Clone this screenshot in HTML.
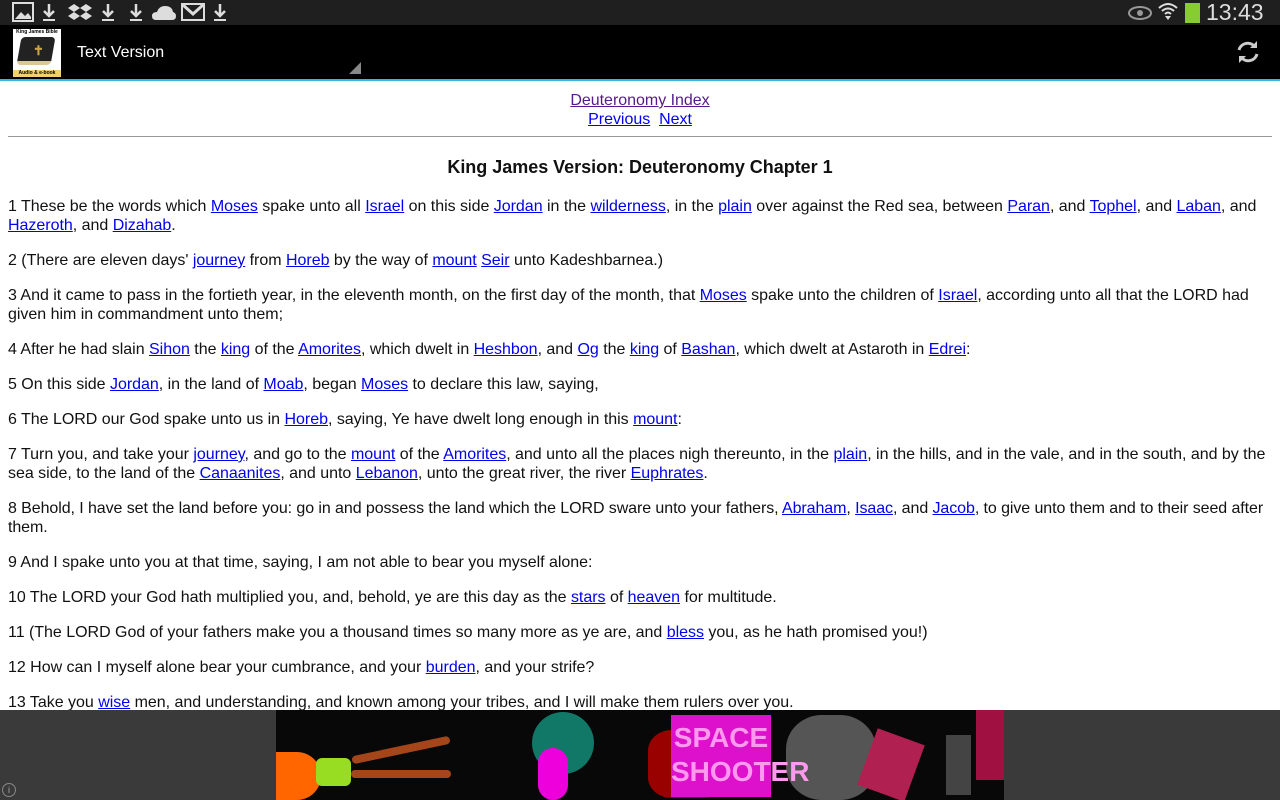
<!DOCTYPE html>
<html><head><meta charset="utf-8"><style>
*{margin:0;padding:0;box-sizing:border-box}
body{width:1280px;height:800px;overflow:hidden;background:#fff;font-family:"Liberation Sans",sans-serif;position:relative}
#sb{position:absolute;top:0;left:0;width:1280px;height:25px;background:#1f1f1f;color:#ddd}
#ab{position:absolute;top:25px;left:0;width:1280px;height:54px;background:#000}
#line{position:absolute;top:79px;left:0;width:1280px;height:2px;background:#33b5e5}
#content{position:absolute;top:82px;left:8px;width:1264px;font-size:16px;line-height:19px;color:#111;letter-spacing:-0.02px}
a{color:#00e;text-decoration:underline}
p{margin-bottom:16px}
#ad{position:absolute;top:710px;left:0;width:1280px;height:90px;background:#3a3a3a}
</style></head><body>
<div id="sb">
<svg width="240" height="25" style="position:absolute;left:12px;top:1px" fill="#ddd">
<rect x="1" y="2" width="20" height="18" fill="none" stroke="#ddd" stroke-width="2"/><path d="M3 18 L9 11 L13 15 L16 12 L19 16 V18Z"/>
<path d="M37 3 V14 M32 10 L37 15 L42 10" stroke="#ddd" stroke-width="2.5" fill="none"/><rect x="31" y="18" width="12" height="2"/>
<path d="M62 3 L68 7 L62 11 L56 7Z M74 3 L80 7 L74 11 L68 7Z M62 11 L68 15 L62 19 L56 15Z M74 11 L80 15 L74 19 L68 15Z"/>
<path d="M96 3 V14 M91 10 L96 15 L101 10" stroke="#ddd" stroke-width="2.5" fill="none"/><rect x="90" y="18" width="12" height="2"/>
<path d="M124 3 V14 M119 10 L124 15 L129 10" stroke="#ddd" stroke-width="2.5" fill="none"/><rect x="118" y="18" width="12" height="2"/>
<path d="M144 19 Q140 19 140 15 Q140 11 145 11 Q147 5 153 5 Q160 5 161 11 Q164 12 164 15 Q164 19 160 19Z"/>
<rect x="170" y="3" width="22" height="16" fill="none" stroke="#ddd" stroke-width="2"/><path d="M171 4 L181 13 L191 4" stroke="#ddd" stroke-width="3" fill="none"/>
<path d="M208 3 V14 M203 10 L208 15 L213 10" stroke="#ddd" stroke-width="2.5" fill="none"/><rect x="202" y="18" width="12" height="2"/>
</svg>
<svg width="80" height="25" style="position:absolute;left:1126px;top:0"><ellipse cx="14" cy="13" rx="11" ry="6" fill="none" stroke="#999" stroke-width="2"/><circle cx="14" cy="13" r="3" fill="#999"/><path d="M33 8 Q42 0 51 8 M36 11 Q42 6 48 11 M39 14 Q42 11 45 14" stroke="#ddd" stroke-width="2" fill="none"/><path d="M42 20 L39 16 L45 16Z" fill="#ddd"/><rect x="59" y="3" width="15" height="20" fill="#8c3"/></svg>
<div style="position:absolute;left:1206px;top:0;font-size:23px;line-height:25px;color:#ddd">13:43</div>
</div>
<div id="ab">
<div style="position:absolute;left:13px;top:4px;width:48px;height:48px;background:#fff">
<div style="font-size:5px;font-weight:bold;text-align:center">King James Bible</div>
<div style="position:absolute;left:6px;top:8px;width:34px;height:28px;background:#222;border-radius:4px;transform:skewX(-10deg);border-bottom:4px solid #d9c89a"></div>
<div style="position:absolute;left:20px;top:14px;color:#c9a24a;font-size:13px;font-weight:bold">✝</div>
<div style="position:absolute;bottom:0;left:0;width:48px;height:7px;background:#f0d070;font-size:5px;text-align:center;font-weight:bold">Audio &amp; e-book</div>
</div>
<div style="position:absolute;left:77px;top:19px;color:#fff;font-size:16px">Text Version</div>
<div style="position:absolute;left:349px;top:37px;width:0;height:0;border-left:12px solid transparent;border-bottom:12px solid #888"></div>
<svg width="26" height="26" style="position:absolute;left:1235px;top:14px" fill="none" stroke="#ccc" stroke-width="3"><path d="M20 8 A9 9 0 0 0 4 11"/><path d="M6 18 A9 9 0 0 0 22 15"/><path d="M15 9 L22 9 L22 2Z" fill="#ccc" stroke="none"/><path d="M11 17 L4 17 L4 24Z" fill="#ccc" stroke="none"/></svg>
</div>
<div id="line"></div>
<div id="content">
<div style="text-align:center;margin-top:9px"><a href="#" style="color:#551a8b">Deuteronomy Index</a><br><a href="#">Previous</a>&nbsp; <a href="#">Next</a></div>
<hr style="border:0;border-top:1px solid #999;margin:7px 0 19px">
<div style="text-align:center;font-weight:bold;font-size:18px;line-height:23px;margin-bottom:18px">King James Version: Deuteronomy Chapter 1</div>
<p>1 These be the words which <a href="#">Moses</a> spake unto all <a href="#">Israel</a> on this side <a href="#">Jordan</a> in the <a href="#">wilderness</a>, in the <a href="#">plain</a> over against the Red sea, between <a href="#">Paran</a>, and <a href="#">Tophel</a>, and <a href="#">Laban</a>, and <a href="#">Hazeroth</a>, and <a href="#">Dizahab</a>.</p>
<p>2 (There are eleven days' <a href="#">journey</a> from <a href="#">Horeb</a> by the way of <a href="#">mount</a> <a href="#">Seir</a> unto Kadeshbarnea.)</p>
<p>3 And it came to pass in the fortieth year, in the eleventh month, on the first day of the month, that <a href="#">Moses</a> spake unto the children of <a href="#">Israel</a>, according unto all that the LORD had given him in commandment unto them;</p>
<p>4 After he had slain <a href="#">Sihon</a> the <a href="#">king</a> of the <a href="#">Amorites</a>, which dwelt in <a href="#">Heshbon</a>, and <a href="#">Og</a> the <a href="#">king</a> of <a href="#">Bashan</a>, which dwelt at Astaroth in <a href="#">Edrei</a>:</p>
<p>5 On this side <a href="#">Jordan</a>, in the land of <a href="#">Moab</a>, began <a href="#">Moses</a> to declare this law, saying,</p>
<p>6 The LORD our God spake unto us in <a href="#">Horeb</a>, saying, Ye have dwelt long enough in this <a href="#">mount</a>:</p>
<p>7 Turn you, and take your <a href="#">journey</a>, and go to the <a href="#">mount</a> of the <a href="#">Amorites</a>, and unto all the places nigh thereunto, in the <a href="#">plain</a>, in the hills, and in the vale, and in the south, and by the sea side, to the land of the <a href="#">Canaanites</a>, and unto <a href="#">Lebanon</a>, unto the great river, the river <a href="#">Euphrates</a>.</p>
<p style="letter-spacing:-0.08px">8 Behold, I have set the land before you: go in and possess the land which the LORD sware unto your fathers, <a href="#">Abraham</a>, <a href="#">Isaac</a>, and <a href="#">Jacob</a>, to give unto them and to their seed after<br>them.</p>
<p>9 And I spake unto you at that time, saying, I am not able to bear you myself alone:</p>
<p>10 The LORD your God hath multiplied you, and, behold, ye are this day as the <a href="#">stars</a> of <a href="#">heaven</a> for multitude.</p>
<p>11 (The LORD God of your fathers make you a thousand times so many more as ye are, and <a href="#">bless</a> you, as he hath promised you!)</p>
<p>12 How can I myself alone bear your cumbrance, and your <a href="#">burden</a>, and your strife?</p>
<p>13 Take you <a href="#">wise</a> men, and understanding, and known among your tribes, and I will make them rulers over you.</p>
</div>
<div id="ad">
<div style="position:absolute;left:276px;top:0;width:728px;height:90px;background:#080808;overflow:hidden">
<div style="position:absolute;left:0;top:42px;width:45px;height:48px;background:#f60;border-radius:0 30px 30px 0"></div>
<div style="position:absolute;left:40px;top:48px;width:35px;height:28px;background:#9d2;border-radius:6px"></div>
<div style="position:absolute;left:75px;top:36px;width:100px;height:8px;background:#a4451a;border-radius:5px;transform:rotate(-12deg)"></div>
<div style="position:absolute;left:75px;top:60px;width:100px;height:8px;background:#a4451a;border-radius:5px"></div>
<div style="position:absolute;left:256px;top:2px;width:62px;height:62px;background:#176;border-radius:50%"></div>
<div style="position:absolute;left:262px;top:38px;width:30px;height:52px;background:#e0d;border-radius:15px"></div>
<div style="position:absolute;left:510px;top:5px;width:90px;height:85px;background:#555;border-radius:40%"></div>
<div style="position:absolute;left:372px;top:20px;width:80px;height:68px;background:#900;border-radius:30%"></div>
<div style="position:absolute;left:395px;top:5px;width:100px;height:82px;background:#d1c;color:#f9e;font:bold 28px/34px 'Liberation Sans',sans-serif;text-align:center;padding-top:6px">SPACE<br>SHOOTER</div>
<div style="position:absolute;left:590px;top:25px;width:50px;height:60px;background:#b02050;transform:rotate(20deg)"></div>
<div style="position:absolute;left:670px;top:25px;width:25px;height:60px;background:#444"></div>
<div style="position:absolute;left:700px;top:0;width:28px;height:70px;background:#a01040"></div>
</div>
<div style="position:absolute;left:2px;top:73px;width:14px;height:14px;border:1px solid #888;border-radius:50%;color:#aaa;font-size:9px;text-align:center;line-height:12px">i</div>
</div>
</body></html>
